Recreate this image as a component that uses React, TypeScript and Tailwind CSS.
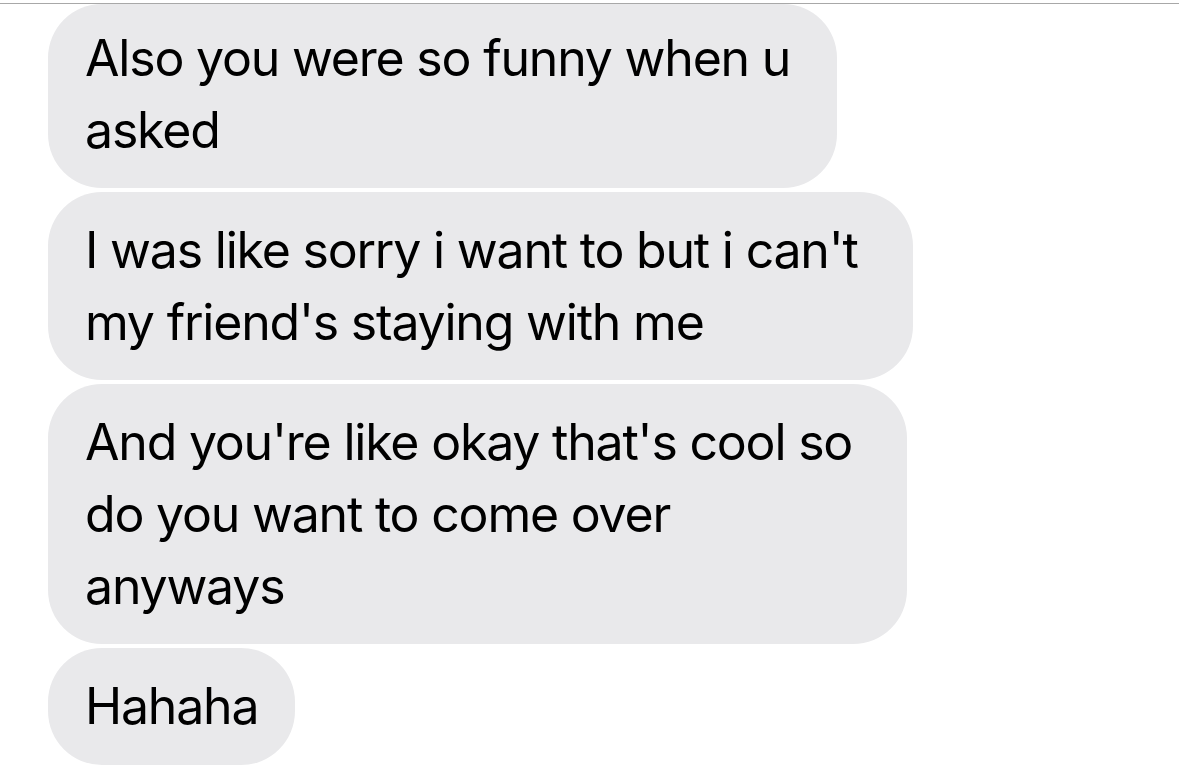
import React from "react";

export default function App() {
  return (
    <div
      className="w-[1179px] h-[767px] bg-white overflow-hidden"
      style={{ fontFamily: "Inter, 'Liberation Sans', sans-serif" }}
    >
      <div className="mt-[3px] h-px bg-[#a8a8a8]" />
      <div className="flex flex-col items-start gap-[4px] pl-[48px] text-black text-[50px] leading-[72px] tracking-[-1.2px] whitespace-nowrap">
        <div className="w-[789px] h-[184px] pt-[18px] pl-[37px] rounded-[54px] bg-[#e9e9eb]">
          <div>Also you were so funny when u</div>
          <div>asked</div>
        </div>
        <div className="w-[865px] h-[188px] pt-[22px] pl-[37px] rounded-[54px] bg-[#e9e9eb]">
          <div>I was like sorry i want to but i can't</div>
          <div>my friend's staying with me</div>
        </div>
        <div className="w-[859px] h-[260px] pt-[22px] pl-[37px] rounded-[54px] bg-[#e9e9eb]">
          <div>And you're like okay that's cool so</div>
          <div>do you want to come over</div>
          <div>anyways</div>
        </div>
        <div className="w-[247px] h-[117px] pt-[22px] pl-[37px] rounded-[54px] bg-[#e9e9eb]">
          <div>Hahaha</div>
        </div>
      </div>
    </div>
  );
}
